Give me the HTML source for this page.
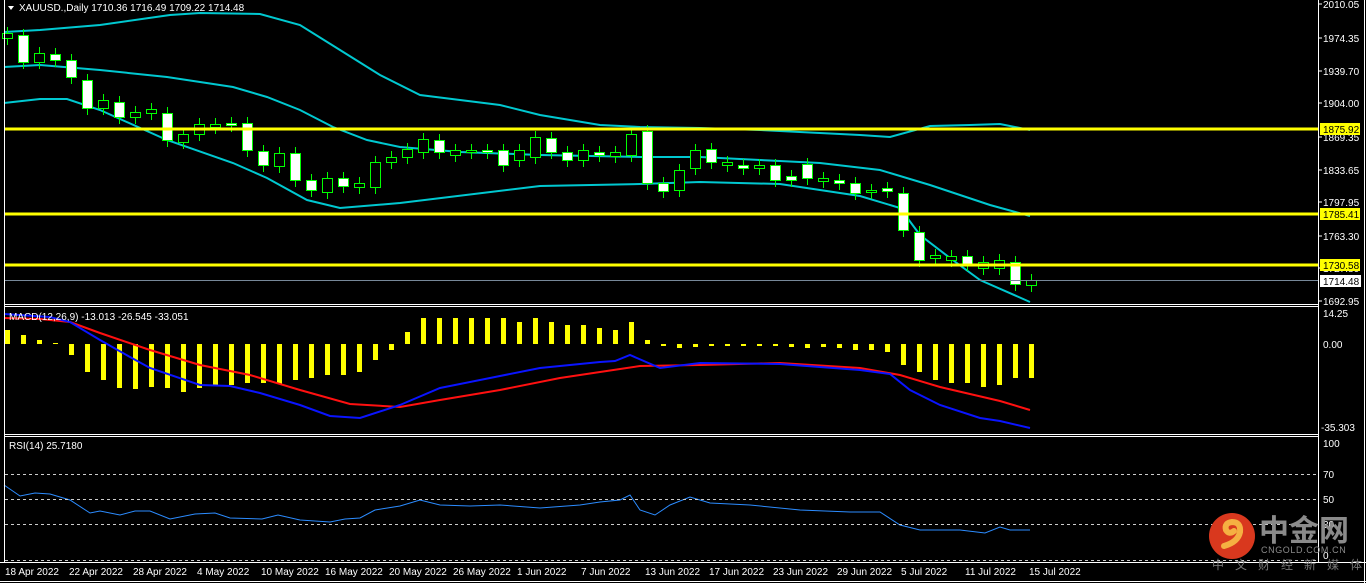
<!DOCTYPE html>
<html><head><meta charset="utf-8"><style>
html,body{margin:0;padding:0;background:#000;width:1366px;height:583px;overflow:hidden}
svg{display:block}
text{font-family:"Liberation Sans",sans-serif;font-size:10px;fill:#fff}
</style></head><body>
<svg id="s" width="1366" height="583" xmlns="http://www.w3.org/2000/svg">
<rect width="1366" height="583" fill="#000"/>
<g id="g"></g>
<!-- borders -->
<g stroke="#fff" stroke-width="1" fill="none">
<line x1="4.5" y1="0" x2="4.5" y2="562"/>
<line x1="1318.5" y1="0" x2="1318.5" y2="562"/>
<line x1="4" y1="304.5" x2="1319" y2="304.5"/>
<line x1="4" y1="306.5" x2="1319" y2="306.5"/>
<line x1="4" y1="434.5" x2="1319" y2="434.5"/>
<line x1="4" y1="436.5" x2="1319" y2="436.5"/>
<line x1="0" y1="562.5" x2="1366" y2="562.5"/>
<line x1="0" y1="581.5" x2="1366" y2="581.5"/>
<line x1="1364.5" y1="0" x2="1364.5" y2="583"/>
</g>
<g stroke="#ccc" stroke-dasharray="3,3" stroke-width="1">
<line x1="5" y1="474.5" x2="1318" y2="474.5"/>
<line x1="5" y1="499.5" x2="1318" y2="499.5"/>
<line x1="5" y1="524.5" x2="1318" y2="524.5"/>
<line x1="5" y1="560.5" x2="1318" y2="560.5"/>
</g>
<line x1="5" y1="280.5" x2="1318" y2="280.5" stroke="#778899"/>
<!-- yellow lines -->
<g stroke="#ffff00" stroke-width="3">
<line x1="5" y1="129" x2="1318" y2="129"/>
<line x1="5" y1="214" x2="1318" y2="214"/>
<line x1="5" y1="265" x2="1318" y2="265"/>
</g>
<!-- axis ticks & labels -->
<g stroke="#fff"><line x1="1318" y1="4" x2="1322" y2="4"/><line x1="1318" y1="38" x2="1322" y2="38"/><line x1="1318" y1="71" x2="1322" y2="71"/><line x1="1318" y1="103" x2="1322" y2="103"/><line x1="1318" y1="137" x2="1322" y2="137"/><line x1="1318" y1="170" x2="1322" y2="170"/><line x1="1318" y1="202" x2="1322" y2="202"/><line x1="1318" y1="236" x2="1322" y2="236"/><line x1="1318" y1="268" x2="1322" y2="268"/><line x1="1318" y1="301" x2="1322" y2="301"/></g>
<text x="1323" y="8">2010.05</text>
<text x="1323" y="42">1974.35</text>
<text x="1323" y="75">1939.70</text>
<text x="1323" y="107">1904.00</text>
<text x="1323" y="141">1869.35</text>
<text x="1323" y="174">1833.65</text>
<text x="1323" y="206">1797.95</text>
<text x="1323" y="240">1763.30</text>
<text x="1323" y="272">1727.80</text>
<text x="1323" y="305">1692.95</text>
<rect x="1320" y="123" width="40" height="12" fill="#ffff00"/><text x="1323" y="133" style="fill:#000">1875.92</text>
<rect x="1320" y="208" width="40" height="12" fill="#ffff00"/><text x="1323" y="218" style="fill:#000">1785.41</text>
<rect x="1320" y="259" width="40" height="12" fill="#ffff00"/><text x="1323" y="269" style="fill:#000">1730.58</text>
<rect x="1320" y="275" width="41" height="12" fill="#fff"/><text x="1323" y="285" style="fill:#000">1714.48</text>
<text x="1323" y="317">14.25</text>
<text x="1323" y="348">0.00</text>
<text x="1321" y="431">-35.303</text>
<text x="1323" y="447">100</text>
<text x="1323" y="478">70</text>
<text x="1323" y="503">50</text>
<text x="1323" y="528">30</text>
<text x="1323" y="559">0</text>
<!-- titles -->
<path d="M8 6 L14 6 L11 10 Z" fill="#fff"/>
<text x="19" y="11">XAUUSD.,Daily  1710.36 1716.49 1709.22 1714.48</text>
<text x="9" y="320">MACD(12,26,9) -13.013 -26.545 -33.051</text>
<text x="9" y="449">RSI(14) 25.7180</text>
<g id="dates"></g>
<text x="5" y="575">18 Apr 2022</text>
<text x="69" y="575">22 Apr 2022</text>
<text x="133" y="575">28 Apr 2022</text>
<text x="197" y="575">4 May 2022</text>
<text x="261" y="575">10 May 2022</text>
<text x="325" y="575">16 May 2022</text>
<text x="389" y="575">20 May 2022</text>
<text x="453" y="575">26 May 2022</text>
<text x="517" y="575">1 Jun 2022</text>
<text x="581" y="575">7 Jun 2022</text>
<text x="645" y="575">13 Jun 2022</text>
<text x="709" y="575">17 Jun 2022</text>
<text x="773" y="575">23 Jun 2022</text>
<text x="837" y="575">29 Jun 2022</text>
<text x="901" y="575">5 Jul 2022</text>
<text x="965" y="575">11 Jul 2022</text>
<text x="1029" y="575">15 Jul 2022</text>
<!-- logo -->
<circle cx="1232" cy="536" r="23" fill="#d9381e"/>
<path d="M1224 546 q14 -4 16 -14 q1 -10 -8 -10 q-8 1 -6 8 q3 5 8 1" stroke="#f5b042" stroke-width="6" fill="none" stroke-linecap="round"/>
<text x="1259" y="541" style="font-family:'Noto Sans CJK SC',sans-serif;font-size:30px;font-weight:bold;fill:#8a8a8a">中金网</text>
<text x="1261" y="553" style="font-size:9px;fill:#8a8a8a;letter-spacing:0.6px">CNGOLD.COM.CN</text>
<text x="1212" y="569" style="font-family:'Noto Sans CJK SC',sans-serif;font-size:12px;fill:#777;letter-spacing:11px">中文财经新媒体</text>
</svg>
<script>
var g=document.getElementById('g'),NS='http://www.w3.org/2000/svg';
function el(t,a){var e=document.createElementNS(NS,t);for(var k in a)e.setAttribute(k,a[k]);g.appendChild(e);return e;}
function pl(p,c,w){el('polyline',{points:p.map(function(q){return q.join(',')}).join(' '),stroke:c,'stroke-width':w,fill:'none'});}
// bands
pl([[4,32],[40,30],[100,25],[170,15],[200,13],[260,14],[300,25],[340,50],[380,75],[420,95],[460,100],[500,105],[540,115],[600,125],[640,127],[700,128],[760,130],[860,135],[890,137],[930,126],[970,125],[1000,124],[1030,130]],'#00c8d0',2);
pl([[4,67],[40,65],[100,70],[167,77],[233,87],[267,97],[300,110],[333,127],[367,140],[400,147],[460,152],[540,155],[640,157],[700,157],[760,160],[820,163],[880,170],[930,185],[990,205],[1030,216]],'#00c8d0',2);
pl([[4,103],[40,99],[67,99],[100,110],[167,140],[233,163],[267,178],[307,200],[340,208],[400,203],[540,186],[640,184],[700,182],[780,184],[860,196],[900,208],[920,235],[950,258],[980,280],[1030,302]],'#00c8d0',2);
// candles [top,bottom,white]
var C=[[33,38,0],[35,62,1],[53,62,0],[54,60,1],[60,77,1],[80,108,1],[100,108,0],[102,117,1],[112,117,0],[109,113,0],[113,140,1],[134,142,0],[124,134,0],[124,127,0],[123,125,1],[123,150,1],[151,165,1],[153,166,0],[153,180,1],[180,190,1],[178,192,0],[178,186,1],[183,187,0],[162,187,0],[157,162,0],[149,157,0],[139,152,0],[140,152,1],[150,155,0],[150,152,0],[150,152,1],[150,165,1],[150,160,0],[137,157,0],[138,152,1],[152,160,1],[150,160,0],[152,155,1],[152,156,0],[134,155,0],[131,183,1],[183,191,1],[170,190,0],[150,168,0],[149,162,1],[162,165,0],[165,168,1],[165,168,0],[165,180,1],[176,180,1],[164,178,1],[178,181,0],[180,183,1],[183,193,1],[190,192,0],[188,191,1],[193,230,1],[232,260,1],[255,258,0],[256,260,0],[256,264,1],[262,268,0],[260,268,0],[262,284,1],[280,285,0]];
// histogram values (y end)
var H=[330,335,340,343,355,372,380,388,389,387,388,392,388,385,385,383,383,384,380,378,375,375,372,360,350,332,318,318,318,318,318,318,322,318,322,325,325,328,330,322,340,346,348,347,346,346,346,346,346,347,348,347,348,350,350,352,365,372,380,383,383,387,385,378,378];
for(var i=0;i<C.length;i++){var x=7+16*i,c=C[i];
 el('line',{x1:x+.5,y1:c[0]-6,x2:x+.5,y2:c[1]+7,stroke:'#00ff00','stroke-width':1});
 var h=Math.max(c[1]-c[0],1);
 el('rect',{x:x-5+.5,y:c[0]+.5,width:10,height:h,fill:c[2]?'#fff':'#000',stroke:'#00ff00','stroke-width':1});
 var v=H[i];el('rect',{x:x-2,y:Math.min(v,344),width:5,height:Math.max(Math.abs(v-344),1),fill:'#ffff00'});
}
pl([[4,318],[40,319],[70,322],[100,333],[150,350],[200,365],[250,375],[300,390],[350,404],[400,407],[440,400],[500,390],[560,378],[600,372],[640,366],[700,365],[780,363],[860,368],[900,375],[940,387],[1000,401],[1030,410]],'#ff1010',2);
pl([[4,314],[50,317],[70,322],[100,340],[130,357],[150,368],[200,385],[230,386],[260,393],[300,405],[330,416],[360,418],[400,405],[440,388],[490,378],[540,368],[600,362],[615,361],[630,355],[660,368],[700,363],[780,364],[860,370],[890,374],[910,390],[940,405],[980,418],[1000,421],[1030,428]],'#0a14ff',2);
pl([[4,485],[20,496],[35,493],[50,494],[70,500],[90,513],[100,511],[120,515],[135,511],[150,511],[170,519],[195,514],[215,513],[230,518],[262,519],[278,515],[300,520],[330,522],[345,519],[360,518],[375,510],[400,506],[420,500],[440,505],[470,506],[500,505],[540,508],[580,505],[600,502],[620,500],[630,495],[640,510],[655,515],[670,505],[690,497],[710,503],[750,505],[800,510],[850,512],[880,512],[900,525],[920,530],[960,530],[985,533],[1000,527],[1010,530],[1030,530]],'#2c8cff',1);
</script>
</body></html>
